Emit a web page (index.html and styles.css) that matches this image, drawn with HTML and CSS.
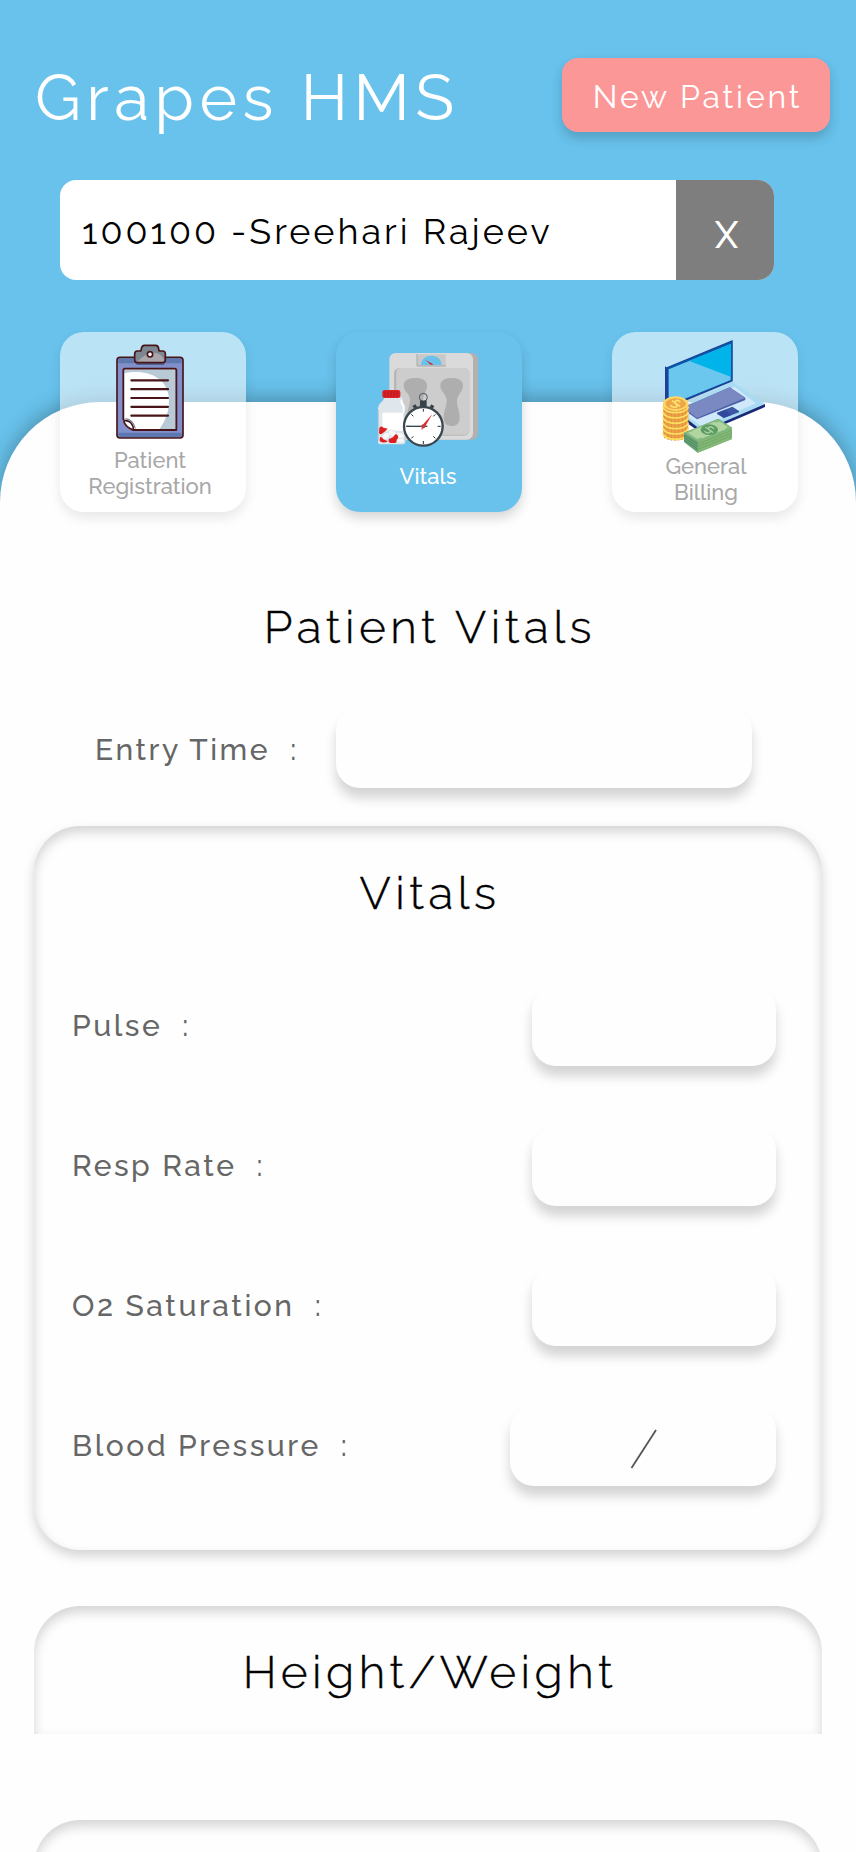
FILE: index.html
```html
<!DOCTYPE html>
<html lang="en">
<head>
<meta charset="utf-8">
<title>Grapes HMS</title>
<link rel="stylesheet" href="styles.css">
</head>
<body>
<div class="app">
  <header class="header">
    <div class="title-row">
      <h1 class="brand">Grapes HMS</h1>
      <button class="new-patient">New Patient</button>
    </div>
    <div class="search">
      <div class="search-value">100100 -Sreehari Rajeev</div>
      <button class="search-clear">X</button>
    </div>
  </header>

  <main class="sheet">
    <nav class="tabs">
      <a class="tab">
        <svg class="icon icon-clipboard" viewBox="0 0 258 312" width="86" height="104">
          <rect x="21" y="52" width="198" height="242" rx="9" fill="#8190cb" stroke="#4a1519" stroke-width="5"/>
          <path d="M25 62q0-7 7-7h176q7 0 7 7v8H25zM25 278h190v5q0 8-7 8H32q-7 0-7-8z" fill="#5c78ae"/>
          <rect x="41" y="86" width="158" height="184" rx="5" fill="#fff"/>
          <path d="M43 88h154v180h-49c38-50 39-118 3-147-26-25-73-29-108-21z" fill="#b8cad6"/>
          <path d="M199 270H70L40 241V91q0-5 5-5h149q5 0 5 5z" fill="none" stroke="#4a1519" stroke-width="5.500" stroke-linejoin="round"/>
          <path d="M24 240h15l29 32H24z" fill="#8190cb"/>
          <path d="M40 241q17 1 22 10 7 7 8 19L55 265 41 247z" fill="#fff"/>
          <path d="M40 241q17 0 24 9 7 8 6 20M41 243q5 18 28 27" fill="none" stroke="#4a1519" stroke-width="5"/>
          <path d="M46 236q24 3 30 30" fill="none" stroke="#7d8fa6" stroke-width="4"/>
          <path d="M64 121h110M64 147.500h110M64 174h110M64 200.500h110M64 227h110" stroke="#4a1519" stroke-width="6.500" stroke-linecap="round"/>
          <path d="M82 72h78" stroke="#4d6390" stroke-width="6" stroke-linecap="round"/>
          <path d="M81 68q-7-1-7-9V42q0-9 8-9h7q5 0 5-7 2-10 9-10h34q8 0 9 10 0 7 5 7h7q8 0 8 9v17q0 8-7 9z" fill="#7b8791"/>
          <path d="M82 65q25-27 50-27 20 1 30 20v8z" fill="#aaa6ad"/>
          <path d="M81 68q-7-1-7-9V42q0-9 8-9h7q5 0 5-7 2-10 9-10h34q8 0 9 10 0 7 5 7h7q8 0 8 9v17q0 8-7 9z" fill="none" stroke="#4a1519" stroke-width="5"/>
          <circle cx="120" cy="43" r="8" fill="#fff" stroke="#4a1519" stroke-width="5"/>
        </svg>
        <span class="tab-label tab-label-left">Patient<br>Registration</span>
      </a>
      <a class="tab tab-active">
        <svg class="icon icon-vitals" viewBox="0 0 354 318" width="118" height="106">
          <rect x="80" y="24" width="245" height="260" rx="20" fill="#b1b1b1"/>
          <rect x="58" y="24" width="251" height="260" rx="19" fill="#dadada"/>
          <rect x="72" y="69" width="226" height="203" rx="16" fill="#b6b6b6"/>
          <rect x="79" y="69" width="218" height="200" rx="14" fill="#cdcdcd"/>
          <path d="M101 122c0-15 13-23 35-23s35 8 35 23c0 18-12 25-12 43 0 20 9 28 9 50 0 18-11 26-28 26s-29-8-29-27c0-18 9-32 9-50 0-19-19-24-19-42zM211 122c0-15 13-23 34-23s34 8 34 23c0 18-18 26-18 46 0 18 8 30 8 50 0 17-10 25-24 25-16 0-24-9-24-26 0-20 9-31 9-51 0-19-19-26-19-44z" fill="#aeaeae"/>
          <rect x="141" y="28" width="86" height="36" fill="#c8c8c8"/>
          <path d="M141 27v36h87" fill="none" stroke="#a9a9a9" stroke-width="3"/>
          <path d="M153 60c2-37 60-37 62 0z" fill="#68c2ec"/>
          <path d="M165 44l18 10q8 3 5 6-9 0-12-7z" fill="#e02024"/>
          <path d="M42 158h56q-1 10 4 16 4 6 4 16v101q0 7-7 7H32q-8 0-8-7V190q0-10 8-17 10-7 10-15z" fill="#dfe6ec"/>
          <path d="M25 287v-93M105 194v95" stroke="#b9cbd7" stroke-width="3"/>
          <path d="M94 164q-2 9 4 15 4 6 3 16v8" fill="none" stroke="#fff" stroke-width="5"/>
          <rect x="37" y="203" width="63" height="54" fill="#fff"/>
          <g fill="#f7f7f7" stroke="#cfd6da" stroke-width="1.500">
            <ellipse cx="48" cy="273" rx="15" ry="9" transform="rotate(-35 48 273)"/>
            <ellipse cx="67" cy="265" rx="13" ry="9" transform="rotate(25 67 265)"/>
            <ellipse cx="91" cy="272" rx="13" ry="9" transform="rotate(35 91 272)"/>
            <ellipse cx="91" cy="287" rx="12" ry="7"/>
          </g>
          <path d="M28 249q6-8 12-1l13 3q-8 9-15 14-8 6-11-2zM30 276q8 0 10 7l14 6-7 3q-17 2-18-6zM57 281q13-2 17-11 4-5 9 1 4 9-3 13 1 10-8 10H60q-7-6-3-13z" fill="#de1f22"/>
          <rect x="37" y="135" width="54" height="24" rx="7" fill="#de2024"/>
          <path d="M45 140v15M54 138v18M63 138v18M72 138v18M81 138v18" stroke="#aa1d1f" stroke-width="3"/>
          <circle cx="160" cy="157" r="12" fill="none" stroke="#4b5559" stroke-width="3"/>
          <path d="M150 167h20v19h-20z" fill="#364249"/>
          <path d="M127 183l9-5 8 12-7 6zM184 178l9 6-9 13-8-6z" fill="#364249"/>
          <circle cx="160" cy="244" r="58" fill="#fff" stroke="#3b474f" stroke-width="7"/>
          <path d="M160 192v8M160 288v9M109 244h9M203 244h9M124 208l6 6M190 274l6 6M196 208l-6 6M124 280l6-6" stroke="#252c31" stroke-width="3"/>
          <path d="M109 244h63" stroke="#33434c" stroke-width="4"/>
          <path d="M187 207l-22 38-11 10 3-14z" fill="#e12b2e"/>
          <circle cx="160" cy="244" r="6" fill="#c93c3c"/>
        </svg>
        <span class="tab-label tab-label-mid">Vitals</span>
      </a>
      <a class="tab">
        <svg class="icon icon-billing" viewBox="-39 0 378 354" width="126" height="118">
          <path d="M330 207v9L142 296 60 239v-9z" fill="#1b2a78"/>
          <path d="M62 226L232 140l98 67-188 81z" fill="#a9dbf2"/>
          <path d="M76 231l162-76 65 50-160 70z" fill="#cfe9fa"/>
          <path d="M102 210l122-53 47 31v7l-145 58-42-31z" fill="#4f61ab"/>
          <path d="M86 218l138-61 47 31-145 61z" fill="#7b89c3"/>
          <path d="M186 233l46-18 20 13v4l-46 17-20-12z" fill="#3d56a5"/>
          <path d="M188 233l24-9 17 16-23 9z" fill="#31499a"/>
          <path d="M30 94l5 3 198-82v124L41 218l-11-7z" fill="#223d91"/>
          <path d="M36 98l196-80v118L40 214z" fill="#0756aa"/>
          <path d="M41 103l186-76v108L41 211z" fill="#6cc7ef"/>
          <path d="M227 27v98L103 78z" fill="#00b3e9"/>
          <path d="M24 206v92c3 24 74 24 76 0v-92z" fill="#eda24a"/>
          <path d="M29 220v90M39 225v90M49 228v89M60 229v89M71 228v88M82 225v89M92 220v88" stroke="#dd8e3d" stroke-width="3"/>
          <path d="M24 215c4 24 71 24 76 0M24 231c4 24 71 24 76 0M24 247c4 24 71 24 76 0M24 263c4 24 71 24 76 0M24 279c4 24 71 24 76 0M24 295c4 24 71 24 76 0" fill="none" stroke="#fde05f" stroke-width="5"/>
          <ellipse cx="62" cy="206" rx="38" ry="22" fill="#ffd767"/>
          <ellipse cx="62" cy="206" rx="31" ry="16" fill="#eca747"/>
          <path d="M76 201q-9-8-14-3-4 4 1 9 6 7 0 9-8 3-17-5M51 197l24 17" fill="none" stroke="#ffe176" stroke-width="5"/>
          <path d="M87 293l103-42 41 27v34l-103 41-41-32z" fill="#66a173"/>
          <path d="M128 319l103-41v34l-103 41z" fill="#83b875"/>
          <path d="M128 327l103-41M128 335l103-41M128 343l103-41" stroke="#66a066" stroke-width="2"/>
          <path d="M87 301l41 26M87 308l41 27M87 315l41 28" stroke="#427f5a" stroke-width="2"/>
          <path d="M87 293l103-42 41 27-103 41z" fill="#85bb80"/>
          <path d="M98 293q13-1 16-7l63-25q13 3 16-2l26 18q-8 2-10 7l-65 25q-9-2-17 3z" fill="#b1d5a1"/>
          <ellipse cx="163" cy="284" rx="26" ry="16" fill="#5b9b65"/>
          <path d="M177 281q-10-9-15-4-4 4 1 7 6 6 0 9-7 3-15-4M151 276l24 17" fill="none" stroke="#a9d19b" stroke-width="4"/>
        </svg>
        <span class="tab-label tab-label-right">General<br>Billing</span>
      </a>
    </nav>

    <h2 class="page-title">Patient Vitals</h2>

    <div class="entry">
      <label class="label label-time">Entry Time&nbsp; :</label>
      <div class="field field-time"></div>
    </div>

    <section class="panel panel-vitals">
      <h2 class="panel-title">Vitals</h2>
      <div class="rows">
        <div class="row"><label class="label">Pulse&nbsp; :</label><div class="field"></div></div>
        <div class="row"><label class="label">Resp Rate&nbsp; :</label><div class="field"></div></div>
        <div class="row"><label class="label">O2 Saturation&nbsp; :</label><div class="field"></div></div>
        <div class="row"><label class="label">Blood Pressure&nbsp; :</label><div class="field field-bp"><svg width="28" height="40" viewBox="0 0 28 40"><path d="M1.500 39L26 1" stroke="#555" stroke-width="1.800"/></svg></div></div>
      </div>
    </section>

    <section class="panel panel-size">
      <h2 class="panel-title">Height/Weight</h2>
    </section>

    <section class="panel panel-next"></section>
  </main>
</div>
</body>
</html>
```

FILE: styles.css
```css
* { box-sizing: border-box; }

body {
  margin: 0;
  font-family: Raleway, Lato, sans-serif;
  color: #000;
}

.app {
  width: 856px;
  height: 1852px;
  overflow: hidden;
  background: linear-gradient(#68c2ec 502px, #fefefe 502px);
}

.header {
  height: 402px;
  padding: 58px 26px 0 36px;
}

.title-row {
  display: flex;
  justify-content: space-between;
  height: 74px;
}

.brand {
  margin: 0 0 0 -1px;
  font-size: 64px;
  font-weight: 400;
  line-height: 79px;
  letter-spacing: 5.5px;
  color: #fff;
}

.new-patient {
  width: 268px;
  height: 74px;
  padding: 2px 0 0 3px;
  border: 0;
  border-radius: 16px;
  background: #fc9797;
  box-shadow: 0 6px 12px rgba(0, 0, 0, 0.18);
  font: 400 32px Raleway, Lato, sans-serif;
  letter-spacing: 2.8px;
  color: #fff;
}

.search {
  display: flex;
  width: 714px;
  height: 100px;
  margin: 48px 0 0 24px;
  border-radius: 16px;
  overflow: hidden;
  background: #fff;
}

.search-value {
  flex: 1;
  padding-left: 22px;
  font-size: 36px;
  line-height: 102px;
  letter-spacing: 3px;
}

.search-clear {
  width: 98px;
  padding: 10px 0 0 3px;
  border: 0;
  background: #7e7e7e;
  font: 500 37px Raleway, Lato, sans-serif;
  color: #fff;
}

.sheet {
  display: flex;
  flex-direction: column;
  height: 1450px;
  border-radius: 100px 100px 0 0;
  background: #fefefe;
  box-shadow: 0 -4px 20px rgba(0, 0, 0, 0.27);
}

.tabs {
  display: flex;
  gap: 90px;
  margin: -70px 0 0 60px;
}

.tab {
  display: flex;
  flex-direction: column;
  align-items: center;
  width: 186px;
  height: 180px;
  border-radius: 24px;
  background: rgba(255, 255, 255, 0.55);
  box-shadow: 0 6px 12px rgba(0, 0, 0, 0.09);
  font-size: 22px;
  font-weight: 500;
  line-height: 26px;
  text-align: center;
  color: #a8a8a8;
}

.tab-active {
  background: #68c2ec;
  box-shadow: 0 6px 12px rgba(0, 0, 0, 0.16);
  color: #fff;
}

.icon { flex: none; display: block; }
.icon-clipboard { margin: 8px 0 3px; }
.icon-vitals { margin: 13px 0 12px; }
.icon-billing { margin-top: 3px; }

.tab-label-left { padding-right: 6px; }
.tab-label-mid { padding-right: 2px; }
.tab-label-right { padding-left: 2px; }

.page-title,
.panel-title {
  margin: 0;
  font-size: 46px;
  font-weight: 300;
  line-height: 60px;
  letter-spacing: 4.5px;
  text-align: center;
  -webkit-text-stroke: 0.4px #000;
}

.page-title { margin-top: 85px; padding-left: 4px; }

.entry {
  display: flex;
  align-items: center;
  justify-content: space-between;
  width: 657px;
  height: 80px;
  margin: 51px 0 0 95px;
}

.label {
  font-size: 30px;
  font-weight: 500;
  line-height: 40px;
  letter-spacing: 2.5px;
  color: #666;
  white-space: nowrap;
}

.label-time { padding-top: 4px; }

.field {
  display: flex;
  align-items: center;
  justify-content: center;
  width: 244px;
  height: 80px;
  border-radius: 24px;
  background: #fefefe;
  box-shadow: 0 10px 12px rgba(0, 0, 0, 0.17);
}

.field-time { width: 416px; }
.field-bp { width: 266px; padding: 6px 0 0 2px; }

.panel {
  flex: none;
  width: 788px;
  margin-left: 34px;
  border-radius: 46px;
  box-shadow: inset 0 6px 12px rgba(0, 0, 0, 0.17);
}

.panel-vitals {
  height: 724px;
  margin-top: 38px;
  padding: 37px 46px 0 38px;
  box-shadow: inset 0 6px 12px rgba(0, 0, 0, 0.17), 0 6px 12px rgba(0, 0, 0, 0.17);
}

.panel-vitals .panel-title { padding-left: 12px; }

.rows {
  display: flex;
  flex-direction: column;
  gap: 60px;
  margin-top: 63px;
}

.row {
  display: flex;
  align-items: center;
  justify-content: space-between;
}

.panel-size {
  height: 128px;
  margin-top: 56px;
  padding: 36px 0 0 4px;
  border-radius: 46px 46px 0 0;
}

.panel-next {
  height: 128px;
  margin-top: 86px;
}
```
